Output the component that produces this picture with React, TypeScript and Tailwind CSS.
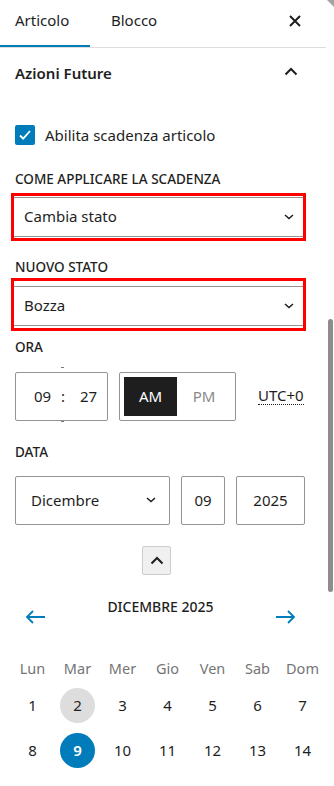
import React from "react";

const weekdays = ["Lun", "Mar", "Mer", "Gio", "Ven", "Sab", "Dom"];
const days = [1, 2, 3, 4, 5, 6, 7, 8, 9, 10, 11, 12, 13, 14];

function ChevronDown() {
  return (
    <svg width="12" height="8" viewBox="0 0 12 8" fill="none" className="text-[#1e1e1e]">
      <path d="M2 2l4 3.5L10 2" stroke="currentColor" strokeWidth="1.5" />
    </svg>
  );
}

function SelectBox({ value, spaced }: { value: string; spaced?: boolean }) {
  return (
    <div className={"ml-[11px] w-[295px] border-[3px] border-[#ff0000] " + (spaced ? "pb-[2px] pt-[5px]" : "py-[1px]")}>
      <div className="flex h-[40px] items-center justify-between border-y border-[#949494] pl-[10px] pr-[8px] text-[15px]">
        <span>{value}</span>
        <ChevronDown />
      </div>
    </div>
  );
}

export default function App() {
  return (
    <div
      className="relative h-[786px] w-[334px] overflow-hidden bg-white text-[#1e1e1e]"
      style={{ fontFamily: '"Noto Sans", "Open Sans", sans-serif' }}
    >
      {/* tabs */}
      <div className="flex h-[48px] w-[326px] items-stretch border-b border-[#ddd]">
        <div className="flex w-[90px] items-center border-b-2 border-[#007cba] pb-[4px] pl-[15px] text-[15px]">Articolo</div>
        <div className="flex items-center pb-[6px] pl-[21px] text-[15px]">Blocco</div>
        <div className="ml-auto flex items-center pb-[6px] pr-[24px]">
          <svg width="14" height="14" viewBox="0 0 14 14" fill="none">
            <path d="M2 2l10 10M12 2L2 12" stroke="#1e1e1e" strokeWidth="2" />
          </svg>
        </div>
      </div>

      {/* panel title */}
      <div className="flex h-[50px] w-[326px] items-center justify-between pl-[15px] pr-[28px]">
        <span className="text-[15px] font-semibold">Azioni Future</span>
        <svg width="14" height="9" viewBox="0 0 14 9" fill="none" className="mb-[4px]">
          <path d="M1.5 7.5L7 2l5.5 5.5" stroke="#1e1e1e" strokeWidth="2" />
        </svg>
      </div>

      {/* checkbox */}
      <div className="mt-[26px] flex items-center gap-[10px] pl-[15px]">
        <div className="flex h-[20px] w-[20px] items-center justify-center rounded-[2px] bg-[#007cba]">
          <svg width="14" height="12" viewBox="0 0 14 12" fill="none">
            <path d="M2 6.5l3.2 3.2L12 2" stroke="white" strokeWidth="1.8" />
          </svg>
        </div>
        <span className="text-[15px]">Abilita scadenza articolo</span>
      </div>

      <div className="mt-[23px] pl-[15px] text-[13.5px] font-medium uppercase leading-[18px]">Come applicare la scadenza</div>
      <div className="mt-[5px]">
        <SelectBox value="Cambia stato" />
      </div>

      <div className="mt-[17px] pl-[15px] text-[13.5px] font-medium uppercase leading-[18px]">Nuovo stato</div>
      <div className="mt-[2px]">
        <SelectBox value="Bozza" spaced />
      </div>

      <div className="mt-[7px] pl-[15px] text-[13.5px] font-medium uppercase leading-[18px]">Ora</div>

      {/* time */}
      <div className="mt-[16px] flex items-center pl-[15px]">
        <div className="relative flex h-[49px] w-[93px] items-center rounded-[2px] border border-[#949494] text-[15px]">
          <span className="w-[46px] pl-[18px]">09</span>
          <span className="relative -ml-[3px] w-[8px] text-center leading-none">:</span>
          <span className="pl-[13px]">27</span>
          <div className="absolute left-[45px] top-[-6px] h-[1px] w-[3px] bg-[#777]" />
          <div className="absolute bottom-[-2px] left-[45px] h-[1px] w-[3px] bg-[#777]" />
        </div>
        <div className="ml-[11px] flex h-[49px] w-[117px] items-center rounded-[2px] border border-[#949494] p-[4px]">
          <div className="flex h-[39px] w-[53px] items-center justify-center bg-[#1e1e1e] text-[15px] text-white">AM</div>
          <div className="flex h-[39px] flex-1 items-center justify-center text-[15px] text-[#8a8a8a]">PM</div>
        </div>
        <span className="ml-[22px] border-b border-dotted border-[#1e1e1e] text-[15px] leading-[17px]">UTC+0</span>
      </div>

      <div className="mt-[22px] pl-[15px] text-[13.5px] font-medium uppercase leading-[18px]">Data</div>

      {/* date */}
      <div className="mt-[15px] flex gap-[11px] pl-[15px]">
        <div className="flex h-[49px] w-[155px] items-center justify-between rounded-[2px] border border-[#949494] pl-[15px] pr-[12px] text-[15px]">
          <span>Dicembre</span>
          <ChevronDown />
        </div>
        <div className="flex h-[49px] w-[44px] items-center justify-center rounded-[2px] border border-[#949494] text-[15px]">09</div>
        <div className="flex h-[49px] w-[69px] items-center justify-center rounded-[2px] border border-[#949494] text-[15px]">2025</div>
      </div>

      <div className="mt-[21px] flex justify-center pr-[21px]">
        <div className="flex h-[29px] w-[29px] items-center justify-center rounded-[2px] border border-[#ccc] bg-[#f0f0f0]">
          <svg width="14" height="9" viewBox="0 0 14 9" fill="none">
            <path d="M1.5 7.5L7 2l5.5 5.5" stroke="#1e1e1e" strokeWidth="2" />
          </svg>
        </div>
      </div>

      {/* calendar nav */}
      <div className="mt-[21px] flex w-[326px] items-start justify-between pl-[25px] pr-[30px]">
        <svg width="21" height="14" viewBox="0 0 21 14" fill="none" className="mt-[14px]">
          <path d="M20 7H2M8 1L2 7l6 6" stroke="#007cba" strokeWidth="1.8" />
        </svg>
        <span className="text-[14px] font-medium">DICEMBRE 2025</span>
        <svg width="21" height="14" viewBox="0 0 21 14" fill="none" className="mt-[14px]">
          <path d="M1 7h18M13 1l6 6-6 6" stroke="#007cba" strokeWidth="1.8" />
        </svg>
      </div>

      {/* calendar grid */}
      <div className="ml-[10px] mt-[34px] grid w-[315px] grid-cols-7 text-center">
        {weekdays.map((d) => (
          <div key={d} className="text-[14.5px] leading-[20px] text-[#757575]">{d}</div>
        ))}
      </div>
      <div className="ml-[10px] mt-[10px] grid w-[315px] grid-cols-7 gap-y-[10px]">
        {days.map((d) => (
          <div key={d} className="flex justify-center">
            <div
              className={
                "flex h-[35px] w-[35px] items-center justify-center rounded-full text-[15px] " +
                (d === 2 ? "bg-[#dddddd]" : d === 9 ? "bg-[#007cba] font-semibold text-white" : "")
              }
            >
              {d}
            </div>
          </div>
        ))}
      </div>

      {/* scrollbar */}
      <div className="absolute right-0 top-0 h-0 w-0 border-l-[7px] border-t-[7px] border-l-transparent border-t-[#a3a3a3]" />
      <div className="absolute right-[1px] top-[319px] h-[273px] w-[5px] rounded-[3px] bg-[#8d8d8d]" />
    </div>
  );
}
